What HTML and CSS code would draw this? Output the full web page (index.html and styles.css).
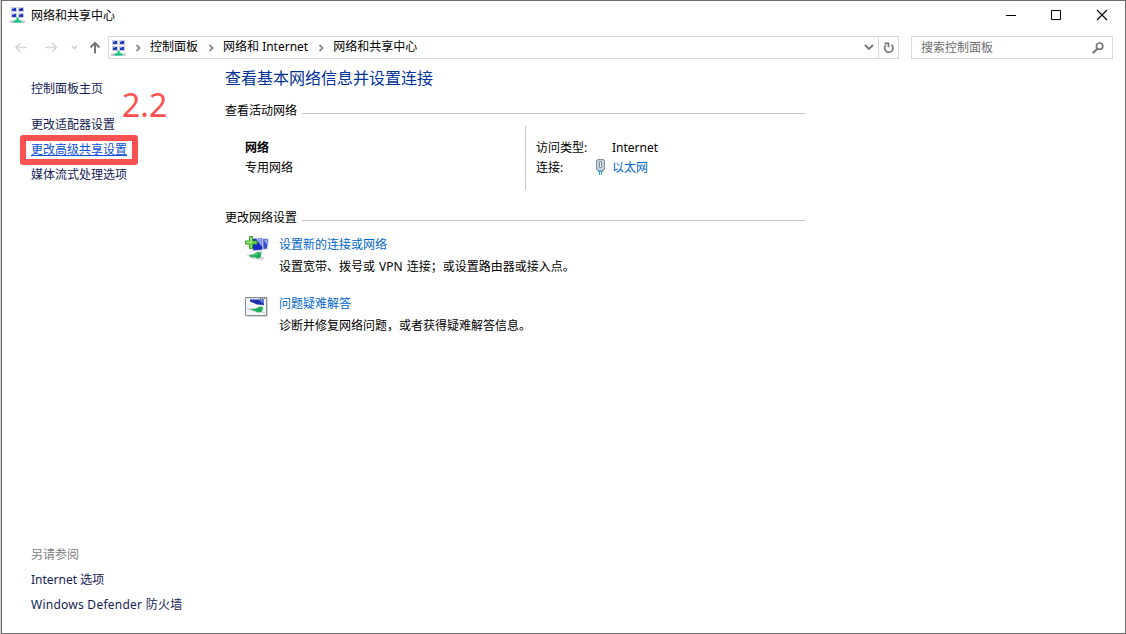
FILE: index.html
```html
<!DOCTYPE html>
<html lang="zh-CN">
<head>
  <meta charset="UTF-8">
  <meta name="viewport" content="width=device-width, initial-scale=1.0">
  <title>网络和共享中心</title>
  <link rel="stylesheet" href="styles.css">
</head>
<body>

  <svg class="defs" width="0" height="0">
    <symbol id="network" viewBox="0 0 16 16">
      <path d="M1 0h6v5H1zM8 0h6v5H8zM1 6h6v5H1zM8 6h6v5H8z" fill="#c9cfdc"/>
      <path d="M2 1h4v3H2zM9 1h4v3H9zM2 7h4v3H2zM9 7h4v3H9z" fill="#2438c4"/>
      <path d="M2 1h2v1H2zM9 1h2v1H9zM2 7h2v1H2zM9 7h2v1H9z" fill="#8294e2"/>
      <path d="M0 13.500h15V16H0z" fill="#c3cbce"/>
      <path d="M6.500 10.500h2v2l3 1.500v1.500h-8V14l3-1.500z" fill="#14c583"/>
    </symbol>
    <symbol id="chevron" viewBox="0 0 6 8">
      <path d="M1.500 1l3 3-3 3" fill="none" stroke="#777" stroke-width="1.600"/>
    </symbol>
  </svg>

  <div class="window">
    <div class="titlebar">
      <svg class="app-icon" width="16" height="16"><use href="#network"/></svg>
      <span class="title">网络和共享中心</span>
      <div class="controls">
        <svg width="46" height="29" viewBox="0 0 46 29"><path d="M18 14.500h10" stroke="#000"/></svg>
        <svg width="46" height="29" viewBox="0 0 46 29"><path d="M17.500 9.500h9v9h-9z" fill="none" stroke="#000"/></svg>
        <svg width="46" height="29" viewBox="0 0 46 29"><path d="M17 9l10 10M27 9L17 19" stroke="#000" stroke-width="1.100"/></svg>
      </div>
    </div>

    <div class="navbar">
      <div class="history">
        <svg width="106" height="23" viewBox="0 0 106 23" fill="none">
          <path d="M25 11.500H14M18.500 7L14 11.500l4.500 4.500" stroke="#d8d8d8" stroke-width="1.600"/>
          <path d="M43 11.500h11.500M50 7l4.500 4.500L50 16" stroke="#d8d8d8" stroke-width="1.600"/>
          <path d="M70 10l2.500 2.500L75 10" stroke="#cfcfcf" stroke-width="1.400"/>
          <path d="M93 17.500V7M88.500 11.500L93 7l4.500 4.500" stroke="#777" stroke-width="2"/>
        </svg>
      </div>
      <div class="address">
        <svg class="address-icon" width="16" height="16"><use href="#network"/></svg>
        <svg class="sep sep-first" width="6" height="8"><use href="#chevron"/></svg>
        <span>控制面板</span>
        <svg class="sep" width="6" height="8"><use href="#chevron"/></svg>
        <span>网络和 Internet</span>
        <svg class="sep" width="6" height="8"><use href="#chevron"/></svg>
        <span>网络和共享中心</span>
        <svg class="dropdown" width="10" height="7" viewBox="0 0 10 7"><path d="M1 1l4 4 4-4" fill="none" stroke="#777" stroke-width="1.900"/></svg>
        <div class="refresh">
          <svg width="12" height="12" viewBox="0 0 12 12" fill="none">
            <path d="M8.200 2.600A4.200 4.200 0 1 1 3 3" stroke="#777" stroke-width="1.700"/>
            <path d="M1.500 1.300h4v4" stroke="#777" stroke-width="1.700"/>
          </svg>
        </div>
      </div>
      <div class="search">
        <span>搜索控制面板</span>
        <svg width="12" height="12" viewBox="0 0 12 12" fill="none" stroke="#777">
          <circle cx="7.600" cy="4.200" r="3.200" stroke-width="1.700"/>
          <path d="M5.300 6.700L.8 11.200" stroke-width="2"/>
        </svg>
      </div>
    </div>

    <div class="body">
      <div class="sidebar">
        <a class="home">控制面板主页</a>
        <a>更改适配器设置</a>
        <a class="active">更改高级共享设置</a>
        <a>媒体流式处理选项</a>
        <div class="see-also">
          <span>另请参阅</span>
          <a>Internet 选项</a>
          <a class="firewall">Windows Defender 防火墙</a>
        </div>
        <div class="highlight"></div>
        <div class="step">2.2</div>
      </div>

      <div class="content">
        <h1>查看基本网络信息并设置连接</h1>

        <div class="section-head">查看活动网络</div>
        <div class="active-network">
          <div class="network-name">
            <strong>网络</strong>
            <span>专用网络</span>
          </div>
          <div class="network-info">
            <span>访问类型:</span>
            <span class="value">Internet</span>
            <span>连接:</span>
            <span class="value">
              <svg class="plug" width="9" height="16" viewBox="0 0 9 16">
                <path d="M.5 1.500L2 .5h5l1.500 1v9H7v2H2v-2H.5z" fill="#c8d3e0" stroke="#8391a7"/>
                <path d="M3.500 2.500h2v6h-2z" fill="#fff" stroke="#7d8ca3"/>
                <path d="M2.500 11h4v2h-4z" fill="#7fa5c2"/>
                <path d="M3.500 12v4M5.500 12v4" stroke="#28a6d0"/>
              </svg>
              <a class="link">以太网</a>
            </span>
          </div>
        </div>

        <div class="section-head">更改网络设置</div>
        <div class="task">
          <svg width="24" height="24" viewBox="0 0 24 24">
            <path d="M17 2.500l6.500.5-1 10-5 .5z" fill="#3a50c8" stroke="#d5dbe8"/>
            <path d="M19 4l3.500.3-.5 4z" fill="#a5b3ee"/>
            <path d="M6 2.500l11.500-.5.500 12-10 1z" fill="#1a2bc0" stroke="#dde3ef"/>
            <path d="M11 3l5.500-.3.500 8z" fill="#93a2ec"/>
            <path d="M12 15.500l4-.5 2 1.500-5 1.500z" fill="#c3cbd4"/>
            <path d="M1 18.500l5-.5 14 4-3 2-9-1z" fill="#cfd4d9"/>
            <path d="M4.500 19.500l4-1.500 4-2 4 1-1 4.500-3 1-3-1.500-4 .5z" fill="#1fad55"/>
            <path d="M7 19l6-1" stroke="#63d98a"/>
            <path d="M4.500.5h3V5H12v3H7.500v4.500h-3V8H.5V5h4z" fill="#7ddb58" stroke="#2fa32a"/>
            <path d="M6 2v4.500H2" fill="none" stroke="#b9f29c"/>
          </svg>
          <div>
            <a class="link">设置新的连接或网络</a>
            <p class="setup-text">设置宽带、拨号或 VPN 连接；或设置路由器或接入点。</p>
          </div>
        </div>
        <div class="task">
          <svg width="24" height="24" viewBox="0 0 24 24">
            <path d="M2 21.500h20.500V3" fill="none" stroke="#d6d6d6"/>
            <path d="M.5 2.500h21v18H.5z" fill="#f5f8fa" stroke="#868e95"/>
            <path d="M1 3h20v1H1z" fill="#dae0e6"/>
            <path d="M15 3.500h1M17 3.500h1M19 3.500h1" stroke="#5c6670"/>
            <path d="M5 4.500h14V10l-7-.5L5 6.500z" fill="#1d2eb0"/>
            <path d="M13 4.500h6V9z" fill="#6577cc"/>
            <path d="M2 13h6l12 4v1.500l-8-1L2 14.500z" fill="#cfd5db"/>
            <path d="M5 14.500l6-1 4-2 3 .5-1 4.500-4 1-4-2z" fill="#1fad55"/>
          </svg>
          <div>
            <a class="link">问题疑难解答</a>
            <p>诊断并修复网络问题，或者获得疑难解答信息。</p>
          </div>
        </div>
      </div>
    </div>
  </div>

</body>
</html>
```

FILE: styles.css
```css
* {
  box-sizing: border-box;
}

body {
  margin: 0;
  background-color: #d0d0d0;
  font-family: "Noto Sans", "Noto Sans CJK SC", sans-serif;
  font-size: 12px;
  line-height: 20px;
  color: #000;
  overflow: hidden;
}

.defs {
  position: absolute;
}

svg {
  display: block;
  flex-shrink: 0;
}

.window {
  display: flex;
  flex-direction: column;
  height: 634px;
  margin-left: 1px;
  background-color: #fff;
  border: 1px solid #6b6b6b;
}

.titlebar {
  display: flex;
  height: 29px;
  padding-left: 8px;
}

.app-icon {
  margin-top: 6px;
}

.title {
  margin: 5px 0 0 5px;
}

.controls {
  display: flex;
  margin: 0 -1px 0 auto;
}

.navbar {
  display: flex;
  height: 23px;
  margin-top: 6px;
  padding-right: 12px;
}

.history {
  width: 106px;
}

.address {
  display: flex;
  align-items: center;
  width: 791px;
  border: 1px solid #d9d9d9;
}

.address span {
  margin-top: -1px;
}

.address-icon {
  margin-left: 2px;
}

.sep {
  margin: 0 9px 0 10px;
}

.sep-first {
  margin-left: 8px;
}

.dropdown {
  margin-left: auto;
}

.refresh {
  display: flex;
  align-items: center;
  justify-content: center;
  width: 20px;
  height: 21px;
  margin-left: 4px;
  border-left: 1px solid #d9d9d9;
}

.search {
  display: flex;
  align-items: center;
  justify-content: space-between;
  width: 202px;
  margin-left: 12px;
  padding: 0 8px 0 9px;
  border: 1px solid #d9d9d9;
  color: #6d6d6d;
}

.body {
  display: flex;
  flex: 1;
}

.sidebar {
  position: relative;
  display: flex;
  flex-direction: column;
  width: 223px;
  padding: 17px 0 16px 29px;
  line-height: 25px;
  color: #151c55;
}

.home {
  margin-bottom: 11px;
}

.active {
  color: #0a50dd;
  text-decoration: underline;
}

.see-also {
  display: flex;
  flex-direction: column;
  margin-top: auto;
}

.see-also span {
  color: #808080;
}

.firewall {
  letter-spacing: 0.25px;
}

/* red frame and number drawn over the page */
.highlight {
  position: absolute;
  left: 18px;
  top: 76px;
  width: 118px;
  height: 30px;
  border: 6px solid #fb5151;
  border-radius: 3px;
}

.step {
  position: absolute;
  left: 120px;
  top: 25px;
  font-size: 32px;
  line-height: 42px;
  color: #fb5151;
}

.content {
  width: 580px;
  padding-top: 7px;
}

h1 {
  margin: 0 0 11px;
  font-size: 16px;
  font-weight: normal;
  line-height: 24px;
  color: #003399;
}

.section-head {
  display: flex;
  gap: 5px;
}

.section-head::after {
  content: "";
  flex: 1;
  height: 1px;
  margin-top: 12px;
  background-color: #c8c8c8;
}

.active-network {
  display: flex;
  height: 64px;
  margin: 5px 0 18px;
}

.network-name {
  display: flex;
  flex-direction: column;
  width: 300px;
  padding: 12px 0 0 20px;
}

.network-info {
  display: grid;
  grid-template-columns: 60px 1fr;
  grid-auto-rows: 20px;
  padding: 12px 0 0 10px;
  border-left: 1px solid #c8c8c8;
}

.value {
  display: flex;
  padding-left: 16px;
}

.plug {
  margin: 1px 7px 0 -16px;
}

.link {
  color: #0066cc;
}

.task {
  display: flex;
  gap: 10px;
  height: 59px;
  padding: 7px 0 0 20px;
}

.task svg {
  margin-top: 1px;
}

.task p {
  margin: 2px 0 0;
}

.setup-text {
  word-spacing: 1px;
}
```
